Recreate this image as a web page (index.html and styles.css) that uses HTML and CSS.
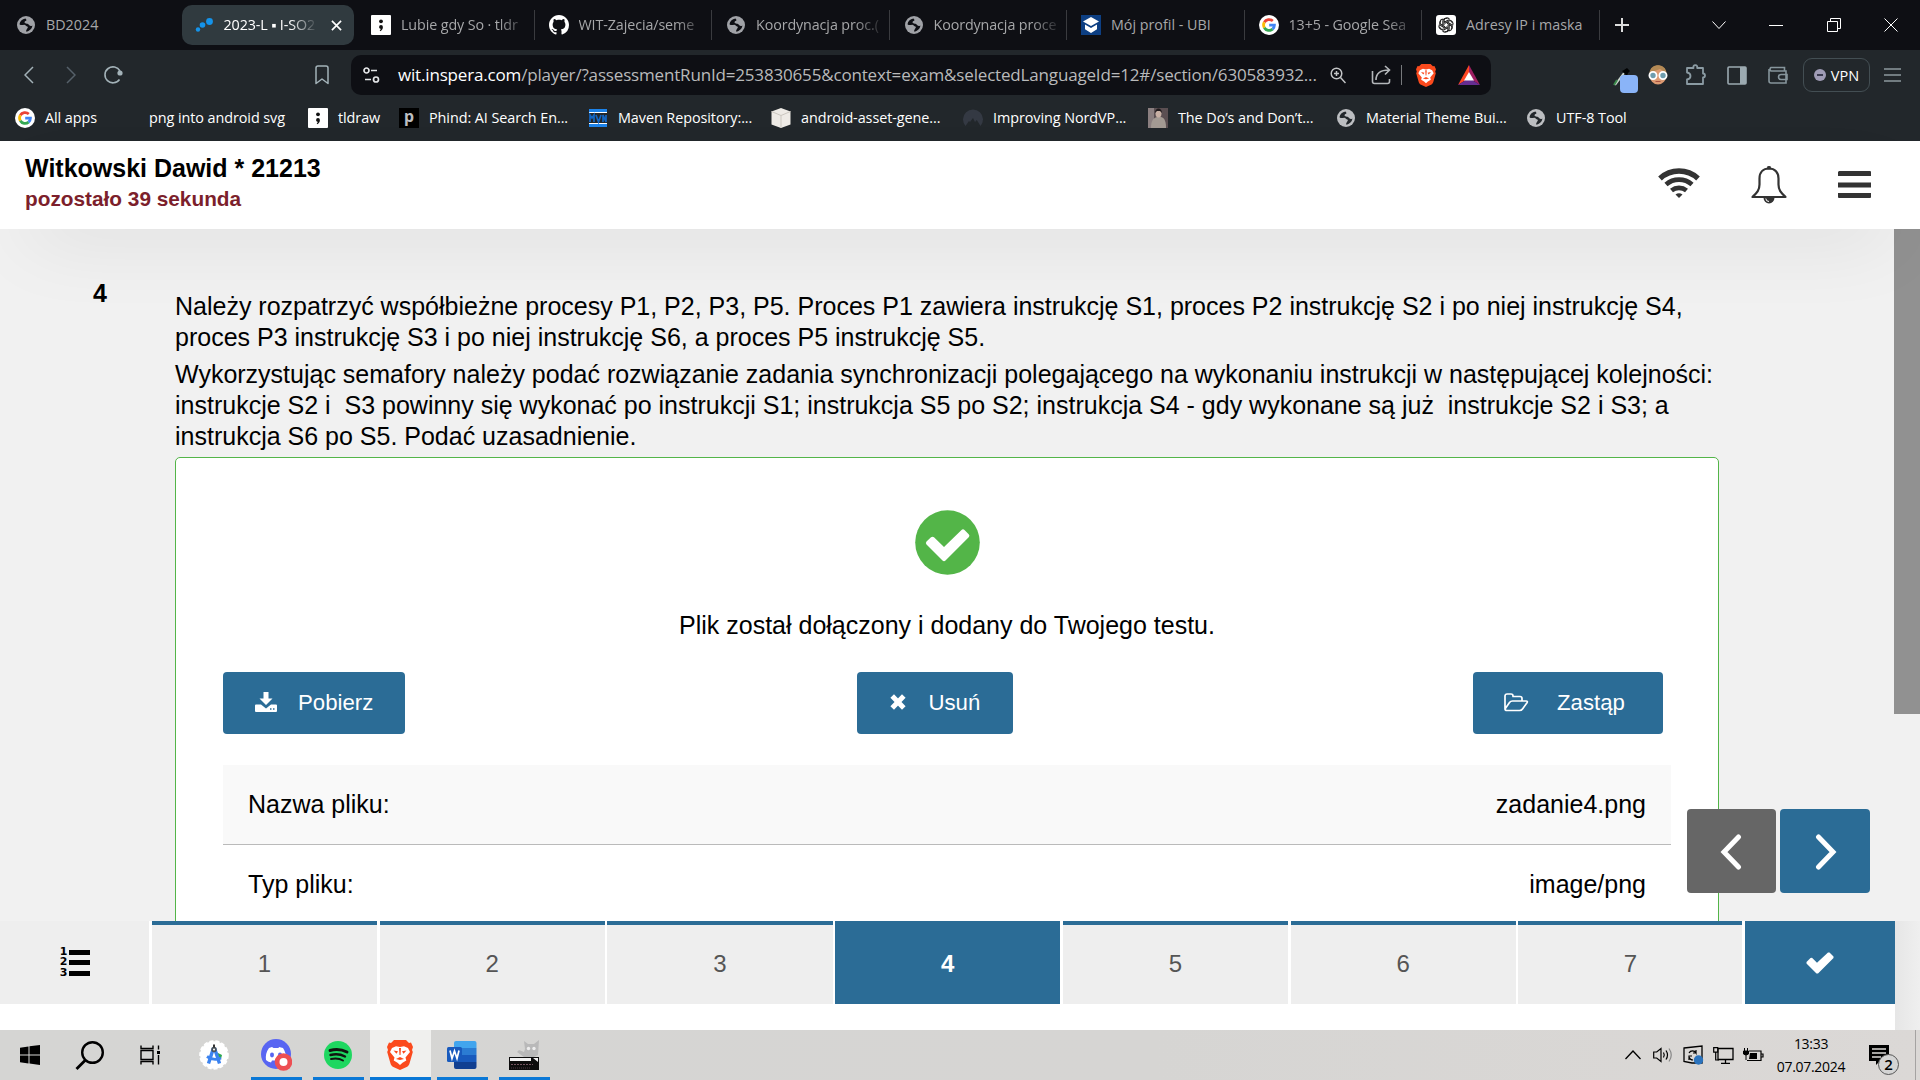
FILE: index.html
```html
<!DOCTYPE html>
<html lang="pl">
<head>
<meta charset="utf-8">
<title>2023-L</title>
<link rel="stylesheet" href="styles.css">
</head>
<body>
<svg class="defs" aria-hidden="true">
  <symbol id="globe" viewBox="0 0 20 20"><circle cx="10" cy="10" r="9" fill="currentColor"/><path d="M9.500 3.500C6 4 3.800 6.500 3.500 9.200c1.500 1.600 3.200.6 4.700.6 1.600 0 1.800 1.700 3.500 2 .6 1.300-1.200 2-1.700 4.700 3.500-.2 6.200-3.200 6.400-6.100-1.700 1-2.800.4-3.800-.8-1.300-1.500-3.800-.5-4.100-2.300 0-1.400 1.900-1.200 2-2.300z" fill="var(--hole)"/></symbol>
  <symbol id="google" viewBox="0 0 20 20"><circle cx="10" cy="10" r="10" fill="#fff"/><g fill="none" stroke-width="2.800"><path d="M5.300 7.300A5.500 5.500 0 0 1 13.800 6" stroke="#ea4335"/><path d="M5.300 12.700a5.500 5.500 0 0 1 0-5.400" stroke="#fbbc05"/><path d="M13.600 14.100a5.500 5.500 0 0 1-8.300-1.400" stroke="#34a853"/><path d="M10.200 10.200h5.200a5.500 5.500 0 0 1-1.800 3.900" stroke="#4285f4"/></g></symbol>
  <symbol id="tldraw" viewBox="0 0 20 20"><rect width="20" height="20" rx="1" fill="#fff"/><circle cx="10" cy="6.300" r="1.900" fill="#111"/><path d="M8.100 12a1.900 1.900 0 0 1 3.800 0c0 2-1 3.600-2.600 4.200l-.6-.8c.8-.5 1.100-1 1.100-1.600-1 0-1.700-.8-1.700-1.800z" fill="#111"/></symbol>
  <symbol id="brave" viewBox="0 0 26 30"><path d="M7 0h12l3 3 2-.5L26 7l-1 3 .8 2-3.300 11.500c-.5 1.500-1 2.200-2.300 3.200L13 30l-7.200-3.300c-1.300-1-1.800-1.700-2.300-3.200L.2 12 1 10 0 7l2-4.500L4 3z" fill="#fb4a1d"/><path d="m5 8 4-1.800 4 .9 4-.9L21 8l2 4-4.500 5.500.8 3-3.800 2.200L13 25l-2.500-2.300-3.800-2.200.8-3L3 12z" fill="#fff"/><path d="m6.500 10.500 4.500.8-1.500 2.400zM19.500 10.500l-4.500.8 1.500 2.400zM12 8h2l-.5 7h-1zM9 19l4-2 4 2-4 1z" fill="#fb4a1d"/></symbol>
</svg>

<div class="tabs">
  <div class="tab"><svg class="fav"><use href="#globe"/></svg><span>BD2024</span></div>
  <div class="tab active"><svg class="fav" viewBox="0 0 20 20"><g fill="#1493ea"><circle cx="4" cy="14.500" r="2.200"/><circle cx="8.500" cy="10" r="2.800"/><circle cx="15.500" cy="6.500" r="3.400"/></g></svg><span class="fade">2023-L ▪ I-SO2</span><svg class="x" viewBox="0 0 12 12"><path d="m1 1 10 10M11 1 1 11" stroke="#fff" stroke-width="1.800"/></svg></div>
  <div class="tab sep"><svg class="fav"><use href="#tldraw"/></svg><span class="fade">Lubie gdy So · tldr</span></div>
  <div class="tab sep"><svg class="fav" viewBox="0 0 16 16"><path fill="#fff" d="M8 0C3.580 0 0 3.580 0 8c0 3.540 2.290 6.530 5.470 7.590.4.070.55-.17.55-.38 0-.19-.01-.82-.01-1.490-2.010.37-2.530-.49-2.690-.94-.09-.23-.48-.94-.82-1.130-.28-.15-.68-.52-.01-.53.63-.01 1.080.58 1.230.82.720 1.210 1.870.87 2.330.66.070-.52.280-.87.510-1.070-1.780-.2-3.640-.89-3.640-3.950 0-.87.310-1.590.820-2.150-.08-.2-.36-1.020.08-2.120 0 0 .67-.21 2.200.82.640-.18 1.320-.27 2-.27s1.360.09 2 .27c1.530-1.040 2.200-.82 2.200-.82.440 1.100.160 1.920.080 2.120.510.560.820 1.270.820 2.150 0 3.070-1.870 3.750-3.650 3.950.290.250.540.730.540 1.480 0 1.070-.01 1.930-.01 2.200 0 .21.150.46.550.38A8.010 8.010 0 0 0 16 8c0-4.420-3.580-8-8-8z"/></svg><span class="fade">WIT-Zajecia/seme</span></div>
  <div class="tab sep"><svg class="fav"><use href="#globe"/></svg><span class="fade">Koordynacja proc.(</span></div>
  <div class="tab sep"><svg class="fav"><use href="#globe"/></svg><span class="fade">Koordynacja proce</span></div>
  <div class="tab sep"><svg class="fav" viewBox="0 0 20 20"><rect width="20" height="20" fill="#0d3f83"/><path d="m10 2 8 4.500-8 4.500-8-4.500zM4 9.500l6 3.400 6-3.400v4.700L10 18l-6-3.800z" fill="#fff"/></svg><span>Mój profil - UBI</span></div>
  <div class="tab sep"><svg class="fav"><use href="#google"/></svg><span class="fade">13+5 - Google Sea</span></div>
  <div class="tab sep"><svg class="fav" viewBox="0 0 20 20"><rect width="20" height="20" rx="3" fill="#fff"/><g fill="none" stroke="#222" stroke-width="1.100"><g id="petal"><path d="M8 10V5.700a3 3 0 0 1 5.500-1.400M8 7.500l3.800-2.200a3 3 0 0 1 4.300 2.400"/></g><use href="#petal" transform="rotate(60 10 10)"/><use href="#petal" transform="rotate(120 10 10)"/><use href="#petal" transform="rotate(180 10 10)"/><use href="#petal" transform="rotate(240 10 10)"/><use href="#petal" transform="rotate(300 10 10)"/></g></svg><span>Adresy IP i maska</span></div>
  <svg class="plus" viewBox="0 0 14 14"><path d="M7 0v14M0 7h14" stroke="#ddd" stroke-width="2"/></svg>
  <div class="wincontrols">
    <svg viewBox="0 0 14 14"><path d="m.5 3.500 6.500 7 6.500-7" fill="none" stroke="#fff"/></svg>
    <svg viewBox="0 0 14 14"><path d="M0 7.500h14" stroke="#fff"/></svg>
    <svg viewBox="0 0 14 14"><path d="M.5 3.500h10v10H.5zM3.500 3V.5h10v10H11" fill="none" stroke="#fff"/></svg>
    <svg viewBox="0 0 14 14"><path d="m.5.500 13 13M13.500.500l-13 13" stroke="#fff"/></svg>
  </div>
</div>

<div class="toolbar">
  <div class="slot w42"><svg width="10" height="18" viewBox="0 0 10 18"><path d="M9 1 1 9l8 8" fill="none" stroke="#a3b2b8" stroke-width="1.500"/></svg></div>
  <div class="slot w42"><svg width="10" height="18" viewBox="0 0 10 18"><path d="m1 1 8 8-8 8" fill="none" stroke="#56616a" stroke-width="1.500"/></svg></div>
  <div class="slot w42"><svg width="20" height="20" viewBox="0 0 20 20"><path d="M16.500 14.500A8 8 0 1 1 17 6" fill="none" stroke="#a3b2b8" stroke-width="1.600"/><circle cx="17" cy="8" r="2.600" fill="#a3b2b8"/></svg></div>
  <div class="slot w42 mark"><svg width="16" height="20" viewBox="0 0 16 20"><path d="M2 3a2 2 0 0 1 2-2h8a2 2 0 0 1 2 2v15.500L8 14l-6 4.500z" fill="none" stroke="#a3b2b8" stroke-width="1.500" stroke-linejoin="round"/></svg></div>
  <div class="url">
    <svg width="17" height="16" viewBox="0 0 17 16"><g fill="none" stroke="#e4e6e8" stroke-width="1.700"><circle cx="3.500" cy="3.500" r="2.500"/><path d="M8 3.500h6M2 12.500h6"/><circle cx="13" cy="12.500" r="2.500"/></g></svg>
    <div class="address"><b>wit.inspera.com</b>/player/?assessmentRunId=253830655&amp;context=exam&amp;selectedLanguageId=12#/section/630583932...</div>
    <div class="slot w42"><svg width="16" height="17" viewBox="0 0 16 17"><g fill="none" stroke="#c2c4c6" stroke-width="1.500"><circle cx="6.500" cy="6.500" r="5.300"/><path d="m10.500 10.500 5 5.500M4 6.500h5M6.500 4v5"/></g></svg></div>
    <div class="slot share"><svg width="20" height="20" viewBox="0 0 20 20"><path d="M1.500 6v10.500a2 2 0 0 0 2 2h13a2 2 0 0 0 2-2V14M5 15c0-6 4-10 13-10M14 1l4.500 4-4.500 4.500" fill="none" stroke="#b4b7ba" stroke-width="1.600"/></svg></div>
    <i class="divider"></i>
    <div class="slot w42 shield"><svg width="20" height="23"><use href="#brave"/></svg></div>
    <div class="slot w44"><svg width="22" height="20" viewBox="0 0 22 20"><path d="M11 0 0 20l11-7z" fill="#ff4724"/><path d="m11 0 11 20-11-7z" fill="#9e1f63"/><path d="m0 20 11-7 11 7z" fill="#662d91"/><path d="m11 7 5 8.500H6z" fill="#fff"/></svg></div>
  </div>
  <div class="extensions">
    <div class="slot w36"><svg class="picker" width="26" height="28" viewBox="0 0 26 28"><path d="m3 20 9-12" stroke="#c9d4cc" stroke-width="2"/><path d="m2 20 3-5" stroke="#3c8a4c" stroke-width="2"/><path d="m10 6 5 5 1-3 2-2-3-3-3 2z" fill="#020303"/><rect x="8" y="10" width="18" height="18" rx="4" fill="#8ab4f8"/></svg></div>
    <div class="slot w34"><svg width="20" height="20" viewBox="0 0 20 20"><ellipse cx="10" cy="10" rx="8.500" ry="9.500" fill="#dc9a72"/><path d="M1.500 8C2-2.500 18-2.500 18.500 8L12 4z" fill="#b48a55"/><g fill="#6f9dae" stroke="#fff" stroke-width="1.800"><circle cx="5" cy="10.500" r="3.600"/><circle cx="15" cy="10.500" r="3.600"/></g><path d="M7.500 16.500h5" stroke="#a8503f"/></svg></div>
    <div class="slot w42"><svg width="22" height="22" viewBox="0 0 22 22"><path d="M2 4h6.500a2 2 0 1 1 3.600 0H18v5.500a2 2 0 1 1 0 4V20H2v-4.500q3.500-.5 3.500-3.500T2 8.500z" fill="none" stroke="#8b9ba3" stroke-width="1.800" stroke-linejoin="round"/></svg></div>
    <div class="slot w40"><svg width="20" height="19" viewBox="0 0 20 19"><rect x="1" y="1" width="18" height="17" rx="1" fill="none" stroke="#9caab1" stroke-width="1.600"/><path d="M13 1h6v17h-6z" fill="#9caab1"/></svg></div>
    <div class="slot w42"><svg width="20" height="18" viewBox="0 0 20 18"><path d="M16.500 5V1.500H3A2 2 0 0 0 3 5h15v12H3a2 2 0 0 1-2-2V3M19 8.500h-6a2.500 2.500 0 0 0 0 5h6z" fill="none" stroke="#86959c" stroke-width="1.600"/></svg></div>
    <div class="vpn"><i></i>VPN</div>
    <div class="slot w44"><svg width="17" height="14" viewBox="0 0 17 14"><path d="M0 1h17M0 7h17M0 13h17" stroke="#8d999f" stroke-width="1.500"/></svg></div>
  </div>
</div>

<div class="bookmarks">
  <div><svg class="fav"><use href="#google"/></svg><span>All apps</span></div>
  <div><i class="fav"></i><span>png into android svg</span></div>
  <div><svg class="fav"><use href="#tldraw"/></svg><span>tldraw</span></div>
  <div><i class="fav phind">p</i><span>Phind: AI Search En...</span></div>
  <div><svg class="fav" viewBox="0 0 20 20"><path d="M1 1h18v3H1zM1 16h18v3H1z" fill="#1c83ea"/><path d="M1 4h18v1H1zM1 15h18v1H1z" fill="#fff"/><path d="M2 14V7l2 3 2-3v7M8 7l2.500 7L13 7M15 14V7l3 7V7" stroke="#1266c4" stroke-width="1.700" fill="none"/></svg><span>Maven Repository:...</span></div>
  <div><svg class="fav" viewBox="0 0 20 20"><path d="m10 0 9.500 3.500v13L10 20 .5 16.500v-13z" fill="#eeebe6"/><path d="m.5 3.500 9.500 4 9.500-4M10 7.500V20" fill="none" stroke="#cbc7c0"/></svg><span>android-asset-gene...</span></div>
  <div><svg class="fav" viewBox="0 0 20 20"><path d="M2.500 18A10 10 0 1 1 17.500 18l-3.700-6-1.800 2-2-4-3 4-1-1z" fill="#343943"/></svg><span>Improving NordVP...</span></div>
  <div><svg class="fav" viewBox="0 0 20 20"><rect width="20" height="20" fill="#5b4f52"/><rect width="6" height="20" fill="#8b7f80"/><path d="M3 20c0-7 2-10 6-11h4c4 1 5 5 5 11z" fill="#a39a93"/><ellipse cx="10.500" cy="5.500" rx="3" ry="4" fill="#c8b0a4"/><path d="M7 5c0-6 7-6 7 0l-2-2H9z" fill="#201a1c"/></svg><span>The Do’s and Don’t...</span></div>
  <div><svg class="fav"><use href="#globe"/></svg><span>Material Theme Bui...</span></div>
  <div><svg class="fav"><use href="#globe"/></svg><span>UTF-8 Tool</span></div>
</div>

<header class="exam-header">
  <div>
    <div class="candidate">Witkowski Dawid * 21213</div>
    <div class="timeleft">pozostało 39 sekunda</div>
  </div>
  <div class="header-icons">
    <svg width="42" height="30" viewBox="0 0 42 30"><g fill="none" stroke="#333"><path d="M2 10.500a28 28 0 0 1 38 0" stroke-width="5.400"/><path d="M8 16.500a20 20 0 0 1 26 0" stroke-width="4.800"/><path d="M13.500 22.500a12 12 0 0 1 15 0" stroke-width="4.700"/></g><path d="M17.500 26.500q3.500-2.500 7 0L21 30z" fill="#333"/></svg>
    <svg width="36" height="38" viewBox="0 0 36 38"><path d="M18 2.500c-6 0-9.500 4-9.500 10v6c0 6-3 8.500-7 12.500h33c-4-4-7-6.500-7-12.500v-6c0-6-3.500-10-9.500-10z" fill="none" stroke="#333" stroke-width="2.200" stroke-linejoin="round"/><path d="M16.500 3V1.500a1.500 1.500 0 0 1 3 0V3z" fill="#333" stroke="#333"/><path d="M12.500 31.500h11a5.500 6 0 0 1-11 0z" fill="#333"/><path d="M14.800 32.500a3.200 3.200 0 0 0 3.200 3" fill="none" stroke="#fff"/></svg>
    <svg width="33" height="28" viewBox="0 0 33 28"><path d="M1 0h31a1 1 0 0 1 1 1v4H0V1zM0 11.500h33v5H0zM0 22h33v4.500l-1 .5H1l-1-.5z" fill="#333"/></svg>
  </div>
</header>

<main class="exam">
  <div class="scroller">
    <div class="qnum">4</div>
    <div class="question">
      <p>Należy rozpatrzyć współbieżne procesy P1, P2, P3, P5. Proces P1 zawiera instrukcję S1, proces P2 instrukcję S2 i po niej instrukcję S4,<br>proces P3 instrukcję S3 i po niej instrukcję S6, a proces P5 instrukcję S5.</p>
      <p>Wykorzystując semafory należy podać rozwiązanie zadania synchronizacji polegającego na wykonaniu instrukcji w następującej kolejności:<br>instrukcje S2 i&nbsp; S3 powinny się wykonać po instrukcji S1; instrukcja S5 po S2; instrukcja S4 - gdy wykonane są już&nbsp; instrukcje S2 i S3; a<br>instrukcja S6 po S5. Podać uzasadnienie.</p>
      <section class="upload">
        <svg class="ok" viewBox="0 0 65 65"><circle cx="32.500" cy="32.500" r="32.300" fill="#53b548"/><path d="m11.500 31.500 4.500-4.300q1.500-1 3 0l10 9.800 17.500-17q1.500-1.300 3 0l4.200 4.300q1.500 1.500 0 3L30.500 50.500q-1.500 1.300-3 0l-16-16q-1.300-1.500 0-3z" fill="#fff"/></svg>
        <div class="status">Plik został dołączony i dodany do Twojego testu.</div>
        <div class="actions">
          <button class="btn download"><svg width="22" height="20" viewBox="0 0 22 20"><path d="M8.500 0h5v6.500h4L11 13 4.500 6.500h4z" fill="#fff"/><path d="M1 12.500h5l5 4 5-4h5a1 1 0 0 1 1 1V19a1 1 0 0 1-1 1H1a1 1 0 0 1-1-1v-5.500a1 1 0 0 1 1-1z" fill="#fff"/><path d="M15 17h1.500M18 17h1.500" stroke="#2b6c96" stroke-width="1.300"/></svg>Pobierz</button>
          <button class="btn remove"><svg width="16" height="16" viewBox="0 0 16 16"><path d="m2.200 2 11.600 12M13.800 2 2.200 14" stroke="#fff" stroke-width="5"/></svg>Usuń</button>
          <button class="btn replace"><svg width="25" height="19" viewBox="0 0 25 19"><path d="M1 16V3a2 2 0 0 1 2-2h4a2 2 0 0 1 2 2v.500h7a2 2 0 0 1 2 2V8M1 16l4.500-6.500Q6.500 8 8.500 8H22q2 0 1 1.700l-4.300 6Q17.500 17.500 15.500 17.500H3Q1 17.500 1 16z" fill="none" stroke="#fff" stroke-width="1.700" stroke-linejoin="round"/></svg>Zastąp</button>
        </div>
        <div class="row shaded"><span>Nazwa pliku:</span><span>zadanie4.png</span></div>
        <div class="row"><span>Typ pliku:</span><span>image/png</span></div>
      </section>
    </div>
  </div>
  <div class="scrollbar"><div class="thumb"></div></div>
  <div class="stepper">
    <button class="prev"><svg width="22" height="36" viewBox="0 0 22 36"><path d="M18.500 3 4 18l14.500 15" fill="none" stroke="#fff" stroke-width="5" stroke-linecap="round"/></svg></button>
    <button class="next"><svg width="22" height="36" viewBox="0 0 22 36"><path d="m3.500 3 14.500 15L3.500 33" fill="none" stroke="#fff" stroke-width="5" stroke-linecap="round"/></svg></button>
  </div>
</main>

<footer class="pager">
  <div class="overview"><div class="digits"><span>1</span><span>2</span><span>3</span></div><div class="lines"><i></i><i></i><i></i></div></div>
  <div class="page">1</div><div class="page">2</div><div class="page">3</div><div class="page current">4</div><div class="page">5</div><div class="page">6</div><div class="page">7</div>
  <div class="submit"><svg width="28" height="22" viewBox="0 0 28 22"><path d="m.500 10 4-4 1.500-.3 5 5L22 .6l1.500-.1L27.500 4.500v1.500L12 21.500h-1.500L.5 11.500z" fill="#fff"/></svg></div>
  <div class="track"></div>
</footer>

<div class="taskbar">
  <div class="task start"><svg width="20" height="20" viewBox="0 0 20 20"><path d="m0 2.800 8.500-1.300v8H0zM9.500 1.300 20 0v9.500H9.500zM0 10.500h8.500v8L0 17.200zM9.500 10.500H20V20L9.500 18.600z"/></svg></div>
  <div class="task search"><svg width="29" height="29" viewBox="0 0 29 29"><circle cx="17.500" cy="11.500" r="10.300" fill="none" stroke="#000" stroke-width="2.400"/><path d="M10.500 19 1.500 28" stroke="#000" stroke-width="2.800"/></svg></div>
  <div class="task view"><svg width="20" height="20" viewBox="0 0 20 20"><path d="M1 .5v3h12v-3M1 19.500v-3h12v3M1 5.500h12v9H1zM18.500.500v4M18.500 10v9.500" fill="none" stroke="#000" stroke-width="1.400"/><path d="M17 6h3v3h-3z"/></svg></div>
  <div class="task studio"><svg width="30" height="30" viewBox="0 0 30 30"><circle cx="15" cy="15" r="13.800" fill="#fff" stroke="#fff" stroke-width="2" stroke-dasharray="4 2"/><path d="m17 12 6 3-1 4-4 1z" fill="#2da94f"/><path d="M14.500 8 9.500 23.500M15.500 8l5 15.500" stroke="#3b83f0" stroke-width="3.400"/><path d="M8 16.500q7 5 14 1.500" fill="none" stroke="#3b83f0" stroke-width="2.800"/><circle cx="15" cy="9.500" r="2.700" fill="#4a5257"/><circle cx="15" cy="9.500" r="1" fill="#fff"/><path d="M14 4.500h2v3h-2z" fill="#333"/></svg></div>
  <div class="task open discord"><svg width="31" height="32" viewBox="0 0 31 32"><circle cx="15" cy="15" r="15" fill="#5865f2"/><path d="m11 8-3 1c-3 4-3.500 8-3 12 2 1.500 3 2 5 2.500l1-2h8l1 2c2-.5 4-1.500 5-2.500.5-5-1-9-3-12l-4-1-.5 1h-5z" fill="#fff"/><ellipse cx="11" cy="16" rx="2" ry="2.400" fill="#5865f2"/><ellipse cx="19" cy="16" rx="2" ry="2.400" fill="#5865f2"/><circle cx="22.500" cy="23" r="8.800" fill="#ed4f53"/><circle cx="22.500" cy="23" r="4" fill="#fff"/></svg></div>
  <div class="task open music"><svg width="28" height="28" viewBox="0 0 28 28"><circle cx="14" cy="14" r="14" fill="#1ed760"/><g fill="none" stroke="#101410" stroke-linecap="round"><path d="M6 9.500q9-2.500 17 1.500" stroke-width="2.900"/><path d="M6.500 14q8-2 14.500 1.500" stroke-width="2.400"/><path d="M7 18q7-1.500 12 1.500" stroke-width="1.900"/></g></svg></div>
  <div class="task open focus"><svg width="26" height="30"><use href="#brave"/></svg></div>
  <div class="task open word"><svg width="30" height="28" viewBox="0 0 30 28"><path d="M7 2q0-2 2-2h18.500q2 0 2 2v5H7z" fill="#41a5ee"/><path d="M7 7h22.500v7H7z" fill="#2b7cd3"/><path d="M7 14h22.500v7H7z" fill="#185abd"/><path d="M7 21h22.500v5q0 2-2 2H9q-2 0-2-2z" fill="#103f91"/><rect y="6" width="15" height="15" rx="1.500" fill="#185abd"/><path d="m3 9.500 2 8 2.500-7.500 2.500 7.500 2-8" fill="none" stroke="#fff" stroke-width="1.700"/></svg></div>
  <div class="task open gimp"><svg width="30" height="30" viewBox="0 0 30 30"><path d="m8 12 2-2 5 2 1-3-1-8 4 3h6l5-4-1 15-4 2H15z" fill="#b9b9b9"/><circle cx="19.500" cy="8.500" r="1.700" fill="#eee"/><circle cx="25" cy="8.500" r="1.700" fill="#eee"/><path d="M0 17h30v13H0z" fill="#0c0c0c"/><path d="M1 18h21v3H1zM24 18l5 4v-4z" fill="#f2f2f2"/><path d="M2 24.500h22" stroke="#73535f" stroke-dasharray="2 1"/><path d="M2 28h20" stroke="#4a3540" stroke-dasharray="1 1"/></svg></div>
  <div class="tray">
    <div class="slot chev"><svg width="16" height="10" viewBox="0 0 16 10"><path d="m.5 9 7.500-8 7.500 8" fill="none" stroke="#000" stroke-width="1.300"/></svg></div>
    <div class="slot sound"><svg width="20" height="16" viewBox="0 0 20 16"><path d="M.7 5h3L8 1.500v13L3.700 11h-3z" fill="none" stroke="#000" stroke-width="1.200"/><path d="M10.500 5.500q1.500 2.500 0 5M13 3.500q3 4.500 0 9" fill="none" stroke="#000" stroke-width="1.200"/><path d="M16 1.500q4.500 6.500 0 13" fill="none" stroke="#888" stroke-width="1.200"/></svg></div>
    <div class="slot sync"><svg width="21" height="20" viewBox="0 0 21 20"><path d="m1 3 18-2v17H9l-8-1.500z" fill="none" stroke="#000" stroke-width="1.300"/><path d="M6 8a4 4 0 0 1 7 0V5M13 8h-3M6 15v-4h3M6 12q1 3 4 3" fill="none" stroke="#000" stroke-width="1.200"/><circle cx="15.500" cy="15" r="4.700" fill="#2b73bd"/></svg></div>
    <div class="slot net"><svg width="21" height="17" viewBox="0 0 21 17"><path d="M5 1.500h15v11H5zM12.500 13v3M8 16.300h9" fill="none" stroke="#000" stroke-width="1.300"/><path d="M.7.700h4v4.500h-4z" fill="#d9d6d4" stroke="#000" stroke-width="1.200"/><path d="M2.700 5v8H6" fill="none" stroke="#000" stroke-width="1.200"/></svg></div>
    <div class="slot power"><svg width="21" height="14" viewBox="0 0 21 14"><path d="M6 3h12v9.500H4M18.500 6h1.500v3h-1.500" fill="none" stroke="#000" stroke-width="1.200"/><path d="M7 5h7v6H6z"/><path d="M.5 3h5v3q-2.500 2-5 0zM1.500 0v3M4.500 0v3M3 7v5" stroke="#000"/></svg></div>
    <div class="clock"><span>13:33</span><span>07.07.2024</span></div>
    <div class="notes"><svg width="20" height="20" viewBox="0 0 20 20"><path d="M0 0h20v16h-9l-4 4v-4H0z"/><path d="M3 4h14M3 8h14M3 12h9" stroke="#dcdad8" stroke-width="1.300"/></svg><span class="badge">2</span></div>
    <i class="peek"></i>
  </div>
</div>
</body>
</html>
```
FILE: styles.css
```css
* { box-sizing: border-box; }
body {
  margin: 0;
  width: 1920px;
  height: 1080px;
  overflow: hidden;
  display: flex;
  flex-direction: column;
  font-family: "Liberation Sans", Arial, sans-serif;
  background: #f1f1f1;
  color: #000;
}
svg { display: block; flex: none; }
.defs { width: 0; height: 0; position: absolute; }
button { border: 0; font: inherit; color: #fff; }
.slot { display: flex; align-items: center; justify-content: center; flex: none; height: 100%; }
.w34 { width: 34px; } .w36 { width: 36px; } .w40 { width: 40px; } .w42 { width: 42px; } .w44 { width: 44px; }
.fav { width: 20px; height: 20px; flex: none; }

.tabs, .toolbar, .bookmarks { font-family: "Open Sans", "Noto Sans", sans-serif; flex: none; }
.tabs { --hole: #0e0f14; height: 50px; background: #0e0f14; display: flex; align-items: center; padding-left: 4px; }
.tab {
  width: 177.500px; height: 40px; flex: none;
  display: flex; align-items: center; gap: 10px; padding: 0 5px 0 12px;
  color: #a6a7a9; font-size: 14.300px;
}
.tab .fav { color: #a0a2a7; }
.tab span { flex: 1; white-space: nowrap; line-height: 24px; }
.tab .fade { -webkit-mask-image: linear-gradient(90deg, #000 75%, transparent 99%); mask-image: linear-gradient(90deg, #000 75%, transparent 99%); letter-spacing: -.1px; }
.tab.sep { background: linear-gradient(#3a3b3f, #3a3b3f) 174.500px center / 1px 30px no-repeat; }
.tab.active { background: #303a3f; border-radius: 10px; width: 172px; margin: 0 5.500px 0 0; padding-right: 12px; color: #fff; }
.tab.active .fade { -webkit-mask-image: linear-gradient(90deg, #000 70%, transparent); mask-image: linear-gradient(90deg, #000 70%, transparent); }
.active .x { width: 11px; height: 11px; margin-left: 3px; }
.plus { width: 14px; height: 14px; margin-left: 13px; }
.wincontrols { display: flex; gap: 43.500px; margin-left: auto; margin-right: 22px; }
.wincontrols svg { width: 14px; height: 14px; }

.toolbar { height: 50px; background: #22272b; display: flex; align-items: center; padding-left: 8px; }
.mark { margin-left: 167px; margin-right: 8px; }
.url { width: 1140px; height: 40px; border-radius: 10px; background: #0e0f14; display: flex; align-items: center; padding-left: 12px; }
.address { width: 919px; margin-left: 18px; color: #b9babb; font-size: 17px; letter-spacing: -.17px; white-space: nowrap; line-height: 30px; }
.address b { font-weight: 400; color: #fff; }
.share { width: 40px; margin-left: 2px; }
.divider { width: 1px; height: 20px; background: #77797c; }
.shield { margin-left: 3px; }
.extensions { display: flex; align-items: center; height: 100%; margin-left: 114px; }
.picker { margin: 8px 0 0 4px; }
.vpn { width: 67px; height: 34px; margin-left: 4px; border: 1px solid #434e53; border-radius: 9px; color: #fff; font-size: 14.500px; display: flex; align-items: center; justify-content: center; gap: 5px; }
.vpn i { width: 12px; height: 12px; border-radius: 50%; background: linear-gradient(#3b3b50, #3b3b50) center / 6px 2px no-repeat #a09cb6; }

.bookmarks {
  --hole: #22272b;
  height: 41px; padding: 0 0 5px 15px; background: #22272b; color: #fff; font-size: 14.400px; letter-spacing: -.07px;
  display: grid; align-items: center;
  grid-template-columns: 104px 189px 91px 189px 183px 192px 185px 188px 190px 200px;
}
.bookmarks div { display: flex; align-items: center; gap: 10px; white-space: nowrap; }
.bookmarks span { margin-top: -2px; }
.bookmarks .fav { color: #bcbec1; }
.phind { background: #000; font: 700 16px/16px "Noto Sans", sans-serif; text-align: center; }

.exam-header {
  height: 88px; flex: none; background: #fff; position: relative; z-index: 2;
  display: flex; justify-content: space-between; padding: 12px 49px 0 25px;
  box-shadow: 0 30px 80px -30px rgba(0, 0, 0, .15);
}
.candidate { font-weight: 700; font-size: 25px; line-height: 31px; }
.timeleft { font-weight: 700; font-size: 20.800px; line-height: 30px; color: #7c1f2c; }
.header-icons { display: flex; gap: 51px; align-items: center; height: 63px; }
.header-icons svg:first-child { margin-top: -3px; }

.exam { height: 692px; flex: none; display: flex; position: relative; overflow: hidden; }
.scroller { width: 1894px; display: flex; padding-top: 50px; font-size: 25px; line-height: 31px; }
.qnum { width: 175px; padding-left: 93px; font-weight: 700; line-height: 28px; }
.question { width: 1544px; padding-top: 12px; }
.question p { margin: 0 0 6px; white-space: nowrap; }
.upload { height: 520px; border: 1px solid #53b548; border-radius: 5px; background: #fff; padding: 52px 47px 0; margin-top: -1px; }
.ok { width: 65px; height: 65px; margin: 0 auto; }
.status { text-align: center; margin-top: 35px; }
.actions { display: flex; justify-content: space-between; margin: 31px 8px 31px 0; }
.btn { height: 62px; border-radius: 4px; background: #2b6c96; font-size: 22.200px; display: flex; align-items: center; padding: 0 0 2px 32px; }
.download { width: 182px; gap: 21px; }
.remove { width: 156px; gap: 23px; margin-left: -9px; padding-left: 33px; }
.replace { width: 190px; gap: 28px; padding-left: 31px; }
.row { height: 80px; display: flex; justify-content: space-between; align-items: center; padding: 0 25px; }
.shaded { background: #f9f9f9; border-bottom: 1px solid #bababa; }
.row:last-child { height: 79px; }
.scrollbar { width: 26px; background: #f1f1f1; }
.thumb { height: 485px; background: #919191; }
.stepper { position: absolute; left: 1687px; top: 580px; display: flex; gap: 4px; }
.stepper button { width: 89px; height: 84px; border-radius: 4px; display: flex; align-items: center; justify-content: center; padding: 1px 0 0; }
.stepper .prev { background: #666; padding-right: 2px; }
.stepper .next { background: #2b6c96; width: 90px; padding-left: 1px; }

.pager {
  height: 109px; flex: none; background: #fff; font-size: 24px; color: #555;
  display: grid; grid-template-columns: 149.200px repeat(6, 225.200px) 224px 150px 1fr; grid-template-rows: 83px 26px; column-gap: 2.600px;
}
.overview, .page { background: #eee; display: flex; align-items: center; justify-content: center; }
.page { border-top: 4px solid #2b6c96; padding-bottom: 1px; }
.page.current { background: #2b6c96; color: #fff; font-weight: 700; }
.submit { background: #2b6c96; display: flex; align-items: center; justify-content: center; }
.track { grid-row: 1 / 3; grid-column: 10; margin-left: -2.600px; background: linear-gradient(90deg, #e6e6e6, #efefef); }
.overview { gap: 2px; color: #000; padding-left: 1px; }
.digits { display: flex; flex-direction: column; font: 700 11px/10px "DejaVu Sans", sans-serif; }
.digits span { height: 10.500px; }
.lines { display: flex; flex-direction: column; gap: 5.500px; }
.lines i { width: 21px; height: 5px; background: #000; }

.taskbar { height: 50px; flex: none; display: flex; background: linear-gradient(90deg, #d5d5d3, #d6d5d3 60%, #dbd8d6); }
.task { width: 51px; height: 50px; margin-right: 11px; flex: none; display: flex; align-items: center; justify-content: center; }
.start, .search, .view { width: 60px; margin: 0; }
.search { padding-right: 2px; }
.studio { width: 68px; margin: 0 3px 0 0; }
.open { border-bottom: 3px solid #0a78d6; padding-top: 3px; }
.music, .word { padding-right: 2px; }
.focus { width: 61px; margin: 0 6px 0 -5px; padding-right: 2px; background: #f0f0ee; }
.gimp { margin: 0; padding-right: 1px; }
.tray { margin-left: auto; display: flex; align-items: center; font-family: "Open Sans", "Noto Sans", sans-serif; }
.tray .slot { width: 30px; }
.clock { width: 74px; margin-left: 6px; font-size: 14px; line-height: 23px; display: flex; flex-direction: column; align-items: center; letter-spacing: -.3px; white-space: nowrap; margin-top: -1px; }
.notes { position: relative; width: 46px; margin-left: 21px; }
.badge { position: absolute; left: 9px; top: 9px; width: 21px; height: 21px; border-radius: 50%; border: 1px solid #555; background: #d4d4d4; font-size: 15px; font-weight: 600; line-height: 19px; text-align: center; }
.peek { width: 1px; height: 50px; background: #a5a3a2; margin-right: 4px; }
```
